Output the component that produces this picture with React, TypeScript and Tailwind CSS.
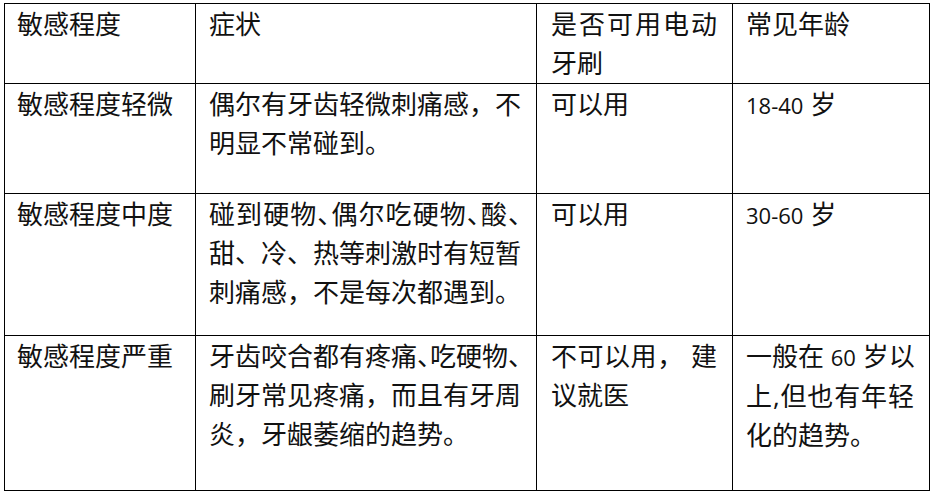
import React from 'react'

// each cell is a list of explicit lines; every line but the last is justified to the cell width
const rows: string[][][] = [
  [['敏感程度'], ['症状'], ['是否可用电动', '牙刷'], ['常见年龄']],
  [['敏感程度轻微'], ['偶尔有牙齿轻微刺痛感，不', '明显不常碰到。'], ['可以用'], ['18-40 岁']],
  [
    ['敏感程度中度'],
    ['碰到硬物、偶尔吃硬物、酸、', '甜、冷、热等刺激时有短暂', '刺痛感，不是每次都遇到。'],
    ['可以用'],
    ['30-60 岁'],
  ],
  [
    ['敏感程度严重'],
    ['牙齿咬合都有疼痛、吃硬物、', '刷牙常见疼痛，而且有牙周', '炎，牙龈萎缩的趋势。'],
    ['不可以用， 建', '议就医'],
    ['一般在 60 岁以', '上,但也有年轻', '化的趋势。'],
  ],
]

// lines where the enumeration commas are squeezed to half width
const halfPunct = new Set(['碰到硬物、偶尔吃硬物、酸、', '牙齿咬合都有疼痛、吃硬物、'])

const rowHeights = ['h-[80px]', 'h-[110px]', 'h-[142px]', 'h-[155px]']
const colPads = ['pl-[12px]', 'pl-[13px]', 'pl-[14px]', 'pl-[13px]']
const colWidths = ['w-[178px]', 'w-[312px]', 'w-[166px]', 'w-[168px]']

function Text({ line }: { line: string }) {
  const parts = line.split(/(\d+(?:-\d+)?)/)
  return (
    <>
      {parts.map((p, i) =>
        /\d/.test(p) ? (
          <span key={i} className="text-[22px]">
            {p}
          </span>
        ) : (
          <React.Fragment key={i}>{p}</React.Fragment>
        )
      )}
    </>
  )
}

function Cell({ lines, col, row }: { lines: string[]; col: number; row: number }) {
  return (
    <div className={`border-r border-b border-black pt-[1px] ${colPads[col]} ${rowHeights[row]}`}>
      <div className={colWidths[col]}>
        {lines.map((line, i) => (
          <div
            key={i}
            className={`whitespace-pre ${
              i < lines.length - 1 ? 'text-justify [text-align-last:justify]' : ''
            } ${halfPunct.has(line) ? "[font-feature-settings:'halt']" : ''}`}
          >
            <Text line={line} />
          </div>
        ))}
      </div>
    </div>
  )
}

export default function App() {
  return (
    <div className="w-[934px] h-[497px] bg-white pt-[3px] pl-[4px] font-['Open_Sans','Noto_Sans_CJK_SC',sans-serif] text-[26px] leading-[39px] text-[#111]">
      <div className="grid grid-cols-[191px_341px_196px_197px] w-[926px] border-l border-t border-black">
        {rows.map((row, r) =>
          row.map((lines, c) => <Cell key={`${r}-${c}`} lines={lines} col={c} row={r} />)
        )}
      </div>
    </div>
  )
}
